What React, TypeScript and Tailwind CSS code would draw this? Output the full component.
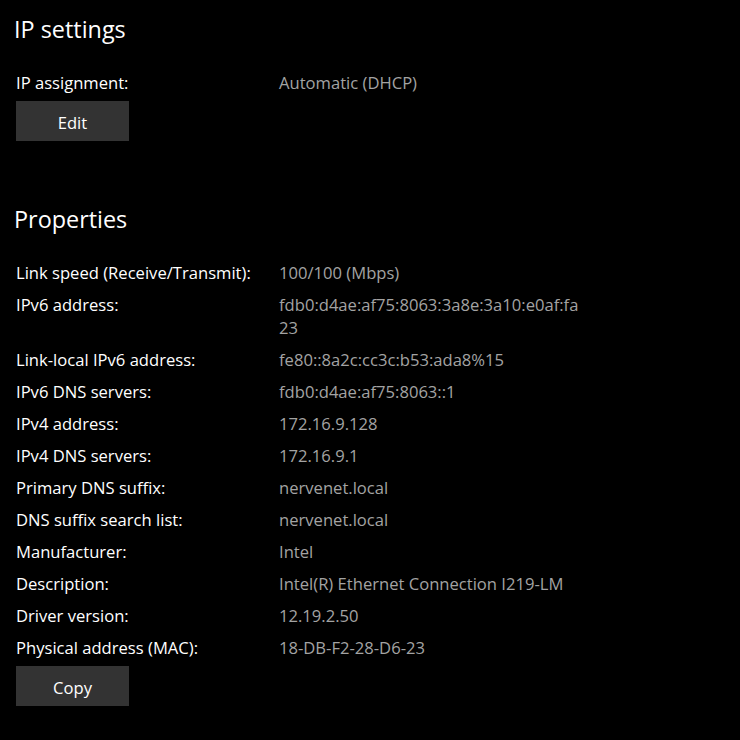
const rows: [string, string][] = [
  ["Link speed (Receive/Transmit):", "100/100 (Mbps)"],
  ["IPv6 address:", "fdb0:d4ae:af75:8063:3a8e:3a10:e0af:fa23"],
  ["Link-local IPv6 address:", "fe80::8a2c:cc3c:b53:ada8%15"],
  ["IPv6 DNS servers:", "fdb0:d4ae:af75:8063::1"],
  ["IPv4 address:", "172.16.9.128"],
  ["IPv4 DNS servers:", "172.16.9.1"],
  ["Primary DNS suffix:", "nervenet.local"],
  ["DNS suffix search list:", "nervenet.local"],
  ["Manufacturer:", "Intel"],
  ["Description:", "Intel(R) Ethernet Connection I219-LM"],
  ["Driver version:", "12.19.2.50"],
  ["Physical address (MAC):", "18-DB-F2-28-D6-23"],
];

function Button({ label }: { label: string }) {
  return (
    <button className="mt-[7px] ml-[16px] flex h-[40px] w-[113px] items-center justify-center bg-[#333333] pt-[2px] text-[16.6px] leading-[23px] text-white">
      {label}
    </button>
  );
}

export default function App() {
  return (
    <div className="min-h-[740px] w-[740px] bg-black font-['Open_Sans',sans-serif] text-white">
      <div className="flex flex-col pt-[13px]">
        <h2 className="pl-[14px] text-[23.4px] leading-[32px] font-normal">IP settings</h2>
        <div className="mt-[26px] flex pl-[16px] text-[16.6px] leading-[23px]">
          <span className="w-[263px] shrink-0">IP assignment:</span>
          <span className="text-[#a3a3a3]">Automatic (DHCP)</span>
        </div>
        <div>
          <Button label="Edit" />
        </div>

        <h2 className="mt-[62px] pl-[14px] text-[23.4px] leading-[32px] font-normal">Properties</h2>
        <div className="mt-[26px] flex flex-col gap-[9px] pl-[16px] text-[16.6px] leading-[23px]">
          {rows.map(([k, v]) => (
            <div key={k} className="flex">
              <span className="w-[263px] shrink-0">{k}</span>
              <span className="w-[300px] break-all text-[#a3a3a3]">{v}</span>
            </div>
          ))}
        </div>
        <div>
          <Button label="Copy" />
        </div>
      </div>
    </div>
  );
}
